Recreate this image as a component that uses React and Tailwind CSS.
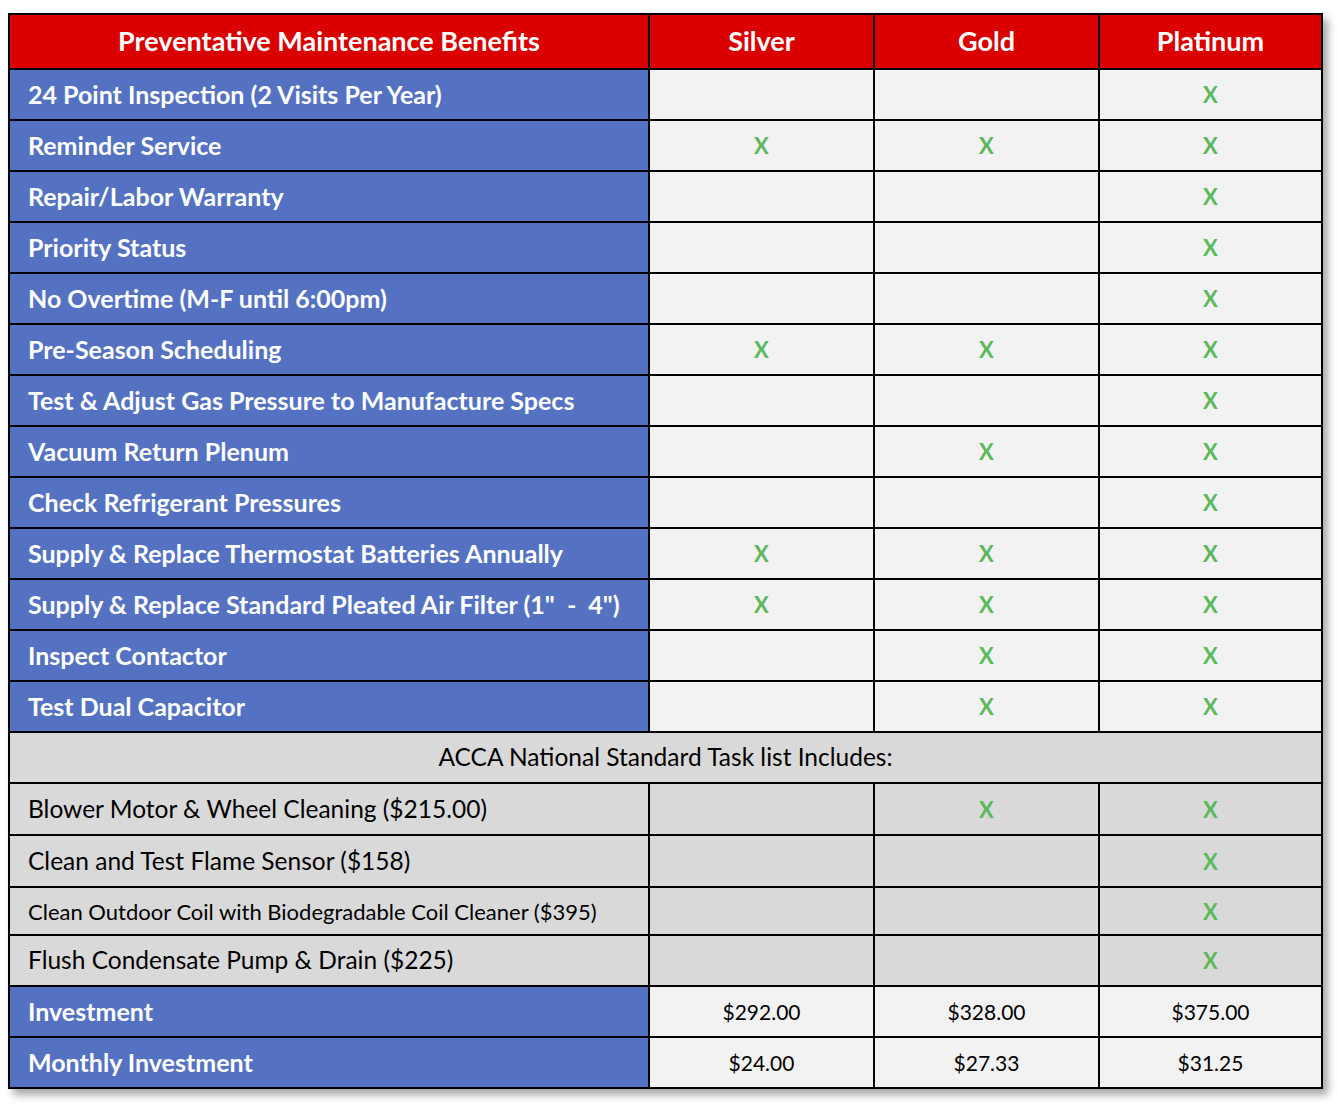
const features = [
  ['24 Point Inspection (2 Visits Per Year)', [0, 0, 1]],
  ['Reminder Service', [1, 1, 1]],
  ['Repair/Labor Warranty', [0, 0, 1]],
  ['Priority Status', [0, 0, 1]],
  ['No Overtime (M-F until 6:00pm)', [0, 0, 1]],
  ['Pre-Season Scheduling', [1, 1, 1]],
  ['Test & Adjust Gas Pressure to Manufacture Specs', [0, 0, 1]],
  ['Vacuum Return Plenum', [0, 1, 1]],
  ['Check Refrigerant Pressures', [0, 0, 1]],
  ['Supply & Replace Thermostat Batteries Annually', [1, 1, 1]],
  ['Supply & Replace Standard Pleated Air Filter (1"  -  4")', [1, 1, 1]],
  ['Inspect Contactor', [0, 1, 1]],
  ['Test Dual Capacitor', [0, 1, 1]],
]

const tasks = [
  ['Blower Motor & Wheel Cleaning ($215.00)', [0, 1, 1], 'text-[24.5px]', 'h-[50px]'],
  ['Clean and Test Flame Sensor ($158)', [0, 0, 1], 'text-[24.5px]', 'h-[50px]'],
  ['Clean Outdoor Coil with Biodegradable Coil Cleaner ($395)', [0, 0, 1], 'text-[22px]', 'h-[46px]'],
  ['Flush Condensate Pump & Drain ($225)', [0, 0, 1], 'text-[24.5px]', 'h-[49px]'],
]

const prices = [
  ['Investment', ['$292.00', '$328.00', '$375.00']],
  ['Monthly Investment', ['$24.00', '$27.33', '$31.25']],
]

function Check({ on }) {
  if (!on) return null
  return <span className="text-[22px] font-bold text-[#5cb85c]">X</span>
}

export default function App() {
  return (
    <div className="min-h-screen bg-white pl-[8px] pt-[13px] font-['Lato','Open_Sans',sans-serif]">
      <div className="grid w-fit grid-cols-[638px_223px_223px_221px] gap-[2px] border-2 border-black bg-black shadow-[5px_6px_8px_rgba(0,0,0,0.35)]">
        <div className="flex h-[53px] items-center justify-center bg-[#db0000] text-[27px] font-bold text-white">
          Preventative Maintenance Benefits
        </div>
        {['Silver', 'Gold', 'Platinum'].map((tier) => (
          <div
            key={tier}
            className="flex h-[53px] items-center justify-center bg-[#db0000] text-[27px] font-bold text-white"
          >
            {tier}
          </div>
        ))}

        {features.map(([label, marks]) => (
          <FeatureRow key={label} label={label} marks={marks} />
        ))}

        <div className="col-span-4 flex h-[49px] items-center justify-center bg-[#d9d9d9] text-[24.5px] text-black">
          ACCA National Standard Task list Includes:
        </div>

        {tasks.map(([label, marks, size, height]) => (
          <div key={label} className="contents">
            <div className={`flex items-center bg-[#d9d9d9] pl-[18px] text-black ${size} ${height}`}>
              {label}
            </div>
            {marks.map((m, i) => (
              <div key={i} className="flex items-center justify-center bg-[#d9d9d9]">
                <Check on={m} />
              </div>
            ))}
          </div>
        ))}

        {prices.map(([label, values]) => (
          <div key={label} className="contents">
            <div className="flex h-[49px] items-center bg-[#5572c2] pl-[18px] text-[25px] font-bold text-white">
              {label}
            </div>
            {values.map((v) => (
              <div key={v} className="flex items-center justify-center bg-[#f2f2f2] text-[21px] text-black">
                {v}
              </div>
            ))}
          </div>
        ))}
      </div>
    </div>
  )
}

function FeatureRow({ label, marks }) {
  return (
    <>
      <div className="flex h-[49px] items-center whitespace-pre bg-[#5572c2] pl-[18px] text-[25px] font-bold text-white">
        {label}
      </div>
      {marks.map((m, i) => (
        <div key={i} className="flex items-center justify-center bg-[#f2f2f2]">
          <Check on={m} />
        </div>
      ))}
    </>
  )
}
